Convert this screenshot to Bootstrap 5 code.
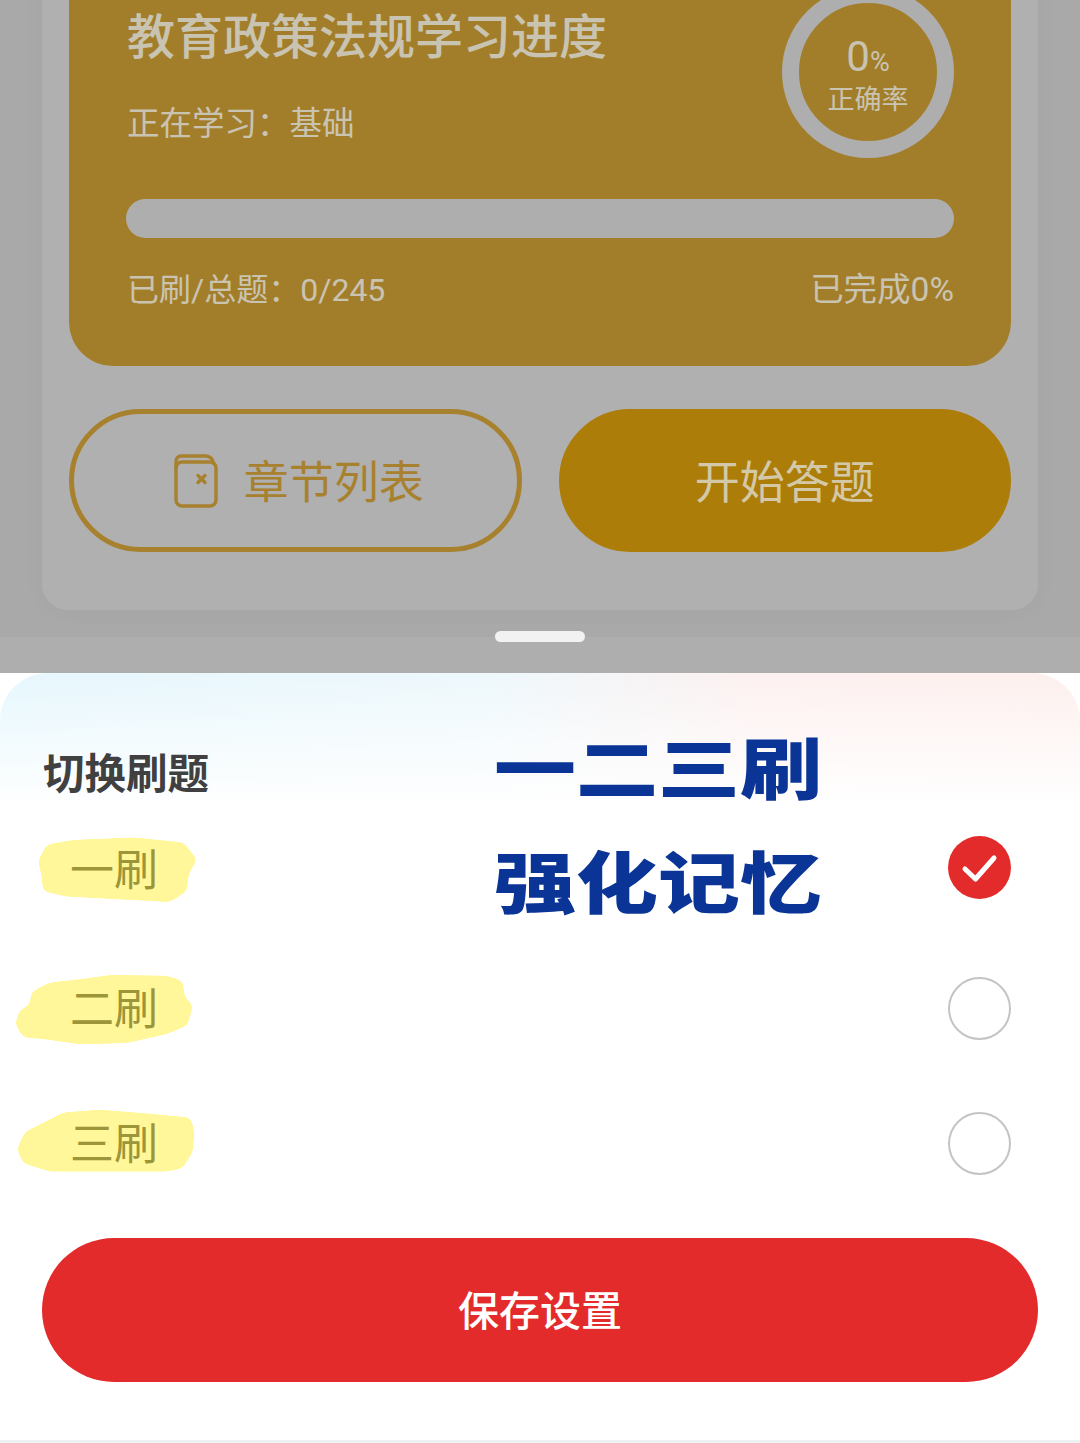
<!DOCTYPE html>
<html lang="zh-CN">
<head>
<meta charset="utf-8">
<title>切换刷题</title>
<link href="https://cdn.jsdelivr.net/npm/bootstrap@5.3.0/dist/css/bootstrap.min.css" rel="stylesheet">
<style>
html, body { margin: 0; height: 1443px; overflow: hidden; }
body { width: 1080px; background: #fff; font-family: Roboto, "Noto Sans CJK SC", "Liberation Sans", sans-serif; }
.page-area { height: 637px; overflow: hidden; background: #a9a9a9; padding: 0 42px; }
.panel { height: 650px; margin-top: -40px; background: #b0b0b0; border-radius: 0 0 26px 26px; padding: 0 27px; box-shadow: 0 0 24px rgba(0,0,0,.03); }
.gold-box { height: 406px; background: #a37e2a; border-radius: 0 0 44px 44px; padding: 26px 57px 0 58px; color: #c9c4b2; }
.ring { width: 172px; height: 172px; border: 17px solid #aeaeae; border-radius: 50%; line-height: 1; padding-top: 7px; }
.ring-num { font-size: 42px; font-weight: 400; margin-top: -2px; }
.ring-num span { font-size: 27px; }
.ring-label { font-size: 27px; margin-top: 9px; }
.head-title { font-size: 48px; font-weight: 500; line-height: 60px; margin: 22px 0 0; }
.head-sub { font-size: 32.5px; line-height: 44px; margin: 34px 0 0; }
.track { height: 39px; background: #aeaeae; border-radius: 20px; margin: 41px 0 0 -1px; }
.stats { font-size: 32px; line-height: 44px; margin-top: 30px; }
.stat-end { font-size: 33.5px; }
.action-row { gap: 37px; margin-top: 43px; }
.action { flex: 0 0 calc((100% - 37px) / 2); height: 143px; font-size: 45px; line-height: 1; border-radius: 72px; display: flex; align-items: center; justify-content: center; padding: 0; }
.action span { padding-top: 6px; }
.action-outline { border: 5px solid #a8812e; color: #a8812e; background: transparent; gap: 26px; padding-left: 7px; }
.action-fill { border: 5px solid #ad7d09; background: #ad7d09; color: #d3c9a8; }
.strip { display: flow-root; height: 36px; background: #aeaeae; }
.handle { width: 90px; height: 11px; margin: -6px auto 0; background: #f2f2f2; border-radius: 6px; }
.sheet { position: relative; height: 770px; border-radius: 48px 48px 0 0; overflow: hidden; background: #fff; border-bottom: 3px solid #eef1f1; }
.sheet-tint { background: linear-gradient(180deg, rgba(255,255,255,0) 0, #fff 135px), linear-gradient(90deg, #e6f7fd 0, #eef8fc 45%, #fdf1f0 70%, #fdf0ee 100%); padding-top: 74px; height: 129px; }
.sheet-title { font-size: 41.500px; font-weight: 700; line-height: 56px; color: #404040; margin: 0 0 0 43px; }
.opt { position: relative; height: 134px; padding: 0 69px 0 70px; font-size: 44px; color: #9c9539; }
.opt-b { margin-top: 5px; }
.opt-c { margin-top: 1px; }
.opt-blob { position: absolute; left: 0; top: 0; width: 200px; height: 134px; overflow: visible; }
.opt-blob polygon { fill: #fff799; filter: url(#blobSoft); }
.opt-text { position: relative; padding-top: 4px; }
.radio-on { position: relative; width: 63px; height: 63px; margin-bottom: 4px; }
.radio-off { position: relative; width: 63px; height: 63px; border: 2px solid #c4c4c4; border-radius: 50%; }
.sticker { position: absolute; left: 494px; top: 41px; font-size: 82px; line-height: 139px; font-weight: 900; color: #0a3596; white-space: nowrap; transform: scaleY(.82); transform-origin: 0 0; }
.save { display: block; width: 996px; height: 144px; margin: 28px 42px 0; padding: 4px 0 0; border: 0; border-radius: 72px; background: #e32b2b; color: #fff; font-size: 41px; font-weight: 500; line-height: 1; }
.save:hover, .save:active { background: #e32b2b !important; color: #fff !important; }
</style>
</head>
<body>
<svg width="0" height="0" class="d-block" aria-hidden="true"><defs><filter id="blobSoft" x="-10%" y="-20%" width="120%" height="140%"><feGaussianBlur stdDeviation="9"/><feComponentTransfer><feFuncA type="linear" slope="14" intercept="-6"/></feComponentTransfer></filter></defs></svg>
<div class="page-area">
  <div class="panel">
    <div class="gold-box">
      <div class="d-flex justify-content-between align-items-start">
        <div>
          <h1 class="head-title">教育政策法规学习进度</h1>
          <p class="head-sub">正在学习：基础</p>
        </div>
        <div class="ring d-flex flex-column align-items-center justify-content-center flex-shrink-0">
          <div class="ring-num">0<span>%</span></div>
          <div class="ring-label">正确率</div>
        </div>
      </div>
      <div class="track"></div>
      <div class="stats d-flex justify-content-between align-items-center">
        <span>已刷/总题：0/245</span>
        <span class="stat-end">已完成0%</span>
      </div>
    </div>
    <div class="action-row d-flex">
      <button type="button" class="btn action action-outline">
        <svg width="44" height="54" viewBox="0 0 44 54" fill="none" stroke="#a8812e" stroke-width="3.4" stroke-linecap="round" stroke-linejoin="round" aria-hidden="true">
          <rect x="2" y="8" width="40" height="44" rx="6"/>
          <path d="M2 14V7a5 5 0 0 1 5-5h25a7 7 0 0 1 7 7"/>
          <path d="M24 21.500l7 7M31 21.500l-7 7"/>
        </svg>
        <span>章节列表</span>
      </button>
      <button type="button" class="btn action action-fill"><span>开始答题</span></button>
    </div>
  </div>
</div>
<div class="strip"><div class="handle"></div></div>
<div class="sheet">
  <div class="sheet-tint">
    <h2 class="sheet-title">切换刷题</h2>
  </div>
  <div class="opt-list">
    <div class="opt d-flex justify-content-between align-items-center">
      <svg class="opt-blob" viewBox="0 426 600 402" aria-hidden="true"><polygon points="115,603 140,555 220,541 400,533 550,548 590,598 565,643 560,693 510,725 400,719 200,709 130,693 125,643"/></svg>
      <span class="opt-text">一刷</span>
      <svg class="radio-on" viewBox="0 0 63 63" aria-hidden="true"><circle cx="31.500" cy="31.500" r="31.500" fill="#e32b2b"/><path d="M17 33l10.500 10L46 22" fill="none" stroke="#fff" stroke-width="5" stroke-linecap="round" stroke-linejoin="round"/></svg>
    </div>
    <div class="opt opt-b d-flex justify-content-between align-items-center">
      <svg class="opt-blob" viewBox="0 843 600 402" aria-hidden="true"><polygon points="46,1091 60,1051 90,1036 95,996 150,968 250,958 330,946 500,948 548,964 553,1011 578,1036 562,1096 500,1121 380,1148 240,1152 130,1136 70,1131"/></svg>
      <span class="opt-text">二刷</span>
      <span class="radio-off"></span>
    </div>
    <div class="opt opt-c d-flex justify-content-between align-items-center">
      <svg class="opt-blob" viewBox="0 1248 600 402" aria-hidden="true"><polygon points="52,1467 75,1417 130,1390 190,1358 300,1350 450,1362 572,1374 582,1417 577,1477 547,1524 500,1534 150,1534 70,1509"/></svg>
      <span class="opt-text">三刷</span>
      <span class="radio-off"></span>
    </div>
  </div>
  <button type="button" class="btn save">保存设置</button>
  <div class="sticker">一二三刷<br>强化记忆</div>
</div>
<script src="https://cdn.jsdelivr.net/npm/bootstrap@5.3.0/dist/js/bootstrap.bundle.min.js"></script>
</body>
</html>
